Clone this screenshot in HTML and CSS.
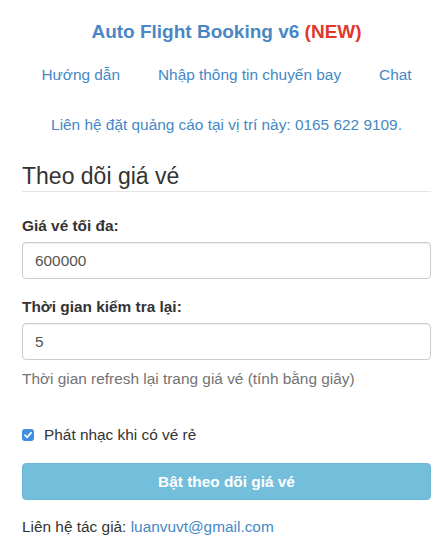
FILE: index.html
```html
<!DOCTYPE html>
<html lang="vi">
<head>
  <meta charset="UTF-8" />
  <meta name="viewport" content="width=device-width, initial-scale=1.0"/>
  <title>Auto Flight Booking v6</title>
  <link rel="stylesheet" href="styles.css">
</head>
<body>
  <div class="container">
    <h1 class="title">Auto Flight Booking v6 <span class="new">(NEW)</span></h1>

    <ul class="nav">
      <li><a href="#">Hướng dẫn</a></li>
      <li><a href="#">Nhập thông tin chuyến bay</a></li>
      <li><a href="#">Chat</a></li>
    </ul>

    <p class="ad"><a href="#">Liên hệ đặt quảng cáo tại vị trí này: 0165 622 9109.</a></p>

    <form class="form">
      <div class="legend">Theo dõi giá vé</div>

      <div class="group">
        <label for="maxPrice">Giá vé tối đa:</label>
        <input id="maxPrice" type="text" value="600000" />
      </div>

      <div class="group">
        <label for="interval">Thời gian kiểm tra lại:</label>
        <input id="interval" type="text" value="5" />
        <p class="help">Thời gian refresh lại trang giá vé (tính bằng giây)</p>
      </div>

      <div class="check">
        <span class="box">
          <svg width="12" height="12" viewBox="0 0 12 12"><path d="M3 6.2 L5.1 8.3 L9 3.8" fill="none" stroke="#fff" stroke-width="1.8" stroke-linecap="round" stroke-linejoin="round"/></svg>
        </span>
        <span>Phát nhạc khi có vé rẻ</span>
      </div>

      <button type="button" class="btn" disabled>Bật theo dõi giá vé</button>
    </form>

    <p class="footer">Liên hệ tác giả: <a href="#">luanvuvt@gmail.com</a></p>
  </div>
</body>
</html>
```

FILE: styles.css
```css
* {
  box-sizing: border-box;
}

body {
  margin: 0;
  font-family: "Liberation Sans", Arial, sans-serif;
  font-size: 15.4px;
  line-height: 20px;
  color: #333;
  background: #fff;
}

a {
  color: #4588c6;
  text-decoration: none;
}

.container {
  padding: 0 16px 0 22px;
}

.title {
  margin: 22px 0 0;
  font-size: 19px;
  line-height: 20px;
  text-align: center;
  color: #4a87c4;
}

.title .new {
  color: #e0392b;
}

.nav {
  list-style: none;
  margin: 13px 0 0;
  padding: 0;
  display: flex;
  justify-content: center;
}

.nav a {
  display: block;
  padding: 10px 19px;
}

.ad {
  margin: 20px 0 0;
  text-align: center;
}

.legend {
  margin: 26px 0 24px;
  font-size: 23px;
  line-height: 30px;
  border-bottom: 1px solid #e5e5e5;
}

.group {
  margin-bottom: 18px;
}

label {
  display: block;
  font-weight: bold;
  margin-bottom: 6px;
}

input {
  display: block;
  width: 100%;
  height: 37px;
  padding: 6px 12px;
  font-family: inherit;
  font-size: 15.4px;
  color: #555;
  border: 1px solid #ccc;
  border-radius: 4px;
  box-shadow: inset 0 1px 1px rgba(0, 0, 0, 0.075);
}

.help {
  margin: 9px 0 0;
  color: #737373;
}

.check {
  margin-top: 36px;
  display: flex;
  align-items: center;
  gap: 10px;
}

.check .box {
  width: 12px;
  height: 12px;
  border-radius: 3px;
  background: #3d8fe3;
  display: flex;
}

.btn {
  display: block;
  width: 100%;
  height: 37px;
  margin-top: 18px;
  border: 1px solid #6cb8d6;
  border-radius: 4px;
  background: #73bedb;
  color: #fff;
  font-family: inherit;
  font-size: 15.4px;
  font-weight: bold;
}

.footer {
  margin: 17px 0 0;
}
```
